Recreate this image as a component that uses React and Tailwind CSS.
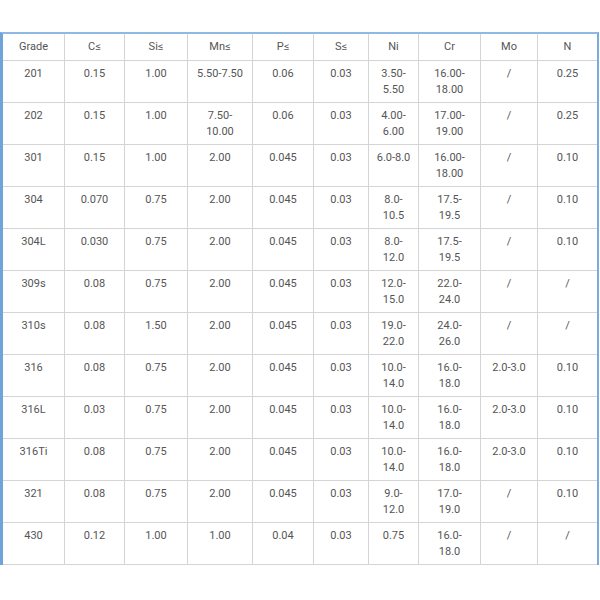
const COLS = [
  { key: 'grade', label: 'Grade', w: 'w-[62px]' },
  { key: 'c', label: 'C≤', w: 'w-[60px]' },
  { key: 'si', label: 'Si≤', w: 'w-[63px]' },
  { key: 'mn', label: 'Mn≤', w: 'w-[65px]' },
  { key: 'p', label: 'P≤', w: 'w-[61px]' },
  { key: 's', label: 'S≤', w: 'w-[55px]' },
  { key: 'ni', label: 'Ni', w: 'w-[50px]' },
  { key: 'cr', label: 'Cr', w: 'w-[62px]' },
  { key: 'mo', label: 'Mo', w: 'w-[57px]' },
  { key: 'n', label: 'N', w: 'w-[59px]' },
];

const ROWS = [
  ['201', '0.15', '1.00', '5.50-7.50', '0.06', '0.03', '3.50-\n5.50', '16.00-\n18.00', '/', '0.25'],
  ['202', '0.15', '1.00', '7.50-\n10.00', '0.06', '0.03', '4.00-\n6.00', '17.00-\n19.00', '/', '0.25'],
  ['301', '0.15', '1.00', '2.00', '0.045', '0.03', '6.0-8.0', '16.00-\n18.00', '/', '0.10'],
  ['304', '0.070', '0.75', '2.00', '0.045', '0.03', '8.0-\n10.5', '17.5-\n19.5', '/', '0.10'],
  ['304L', '0.030', '0.75', '2.00', '0.045', '0.03', '8.0-\n12.0', '17.5-\n19.5', '/', '0.10'],
  ['309s', '0.08', '0.75', '2.00', '0.045', '0.03', '12.0-\n15.0', '22.0-\n24.0', '/', '/'],
  ['310s', '0.08', '1.50', '2.00', '0.045', '0.03', '19.0-\n22.0', '24.0-\n26.0', '/', '/'],
  ['316', '0.08', '0.75', '2.00', '0.045', '0.03', '10.0-\n14.0', '16.0-\n18.0', '2.0-3.0', '0.10'],
  ['316L', '0.03', '0.75', '2.00', '0.045', '0.03', '10.0-\n14.0', '16.0-\n18.0', '2.0-3.0', '0.10'],
  ['316Ti', '0.08', '0.75', '2.00', '0.045', '0.03', '10.0-\n14.0', '16.0-\n18.0', '2.0-3.0', '0.10'],
  ['321', '0.08', '0.75', '2.00', '0.045', '0.03', '9.0-\n12.0', '17.0-\n19.0', '/', '0.10'],
  ['430', '0.12', '1.00', '1.00', '0.04', '0.03', '0.75', '16.0-\n18.0', '/', '/'],
];

export default function App() {
  return (
    <div className="h-[600px] w-[600px] bg-white pt-[32px] font-['Roboto',sans-serif]">
      <div className="w-[599px] border-t-2 border-l-[3px] border-r-2 border-t-[#8fb8e3] border-l-[#6fa3da] border-r-[#7aaade]">
        <table className="table-fixed border-separate border-spacing-0 text-[11px] text-[#555]">
          <colgroup>
            {COLS.map((c) => (
              <col key={c.key} className={c.w} />
            ))}
          </colgroup>
          <thead>
            <tr className="h-[27px]">
              {COLS.map((c, i) => (
                <th
                  key={c.key}
                  className={`border-b border-[#d4d4d4] text-center align-middle font-normal leading-4 ${
                    i < COLS.length - 1 ? 'border-r' : ''
                  }`}
                >
                  {c.label}
                </th>
              ))}
            </tr>
          </thead>
          <tbody>
            {ROWS.map((row) => (
              <tr key={row[0]} className="h-[42px]">
                {row.map((cell, i) => (
                  <td
                    key={i}
                    className={`whitespace-pre-line border-b border-[#d4d4d4] pt-[5px] text-center align-top leading-4 ${
                      i < row.length - 1 ? 'border-r' : ''
                    }`}
                  >
                    {cell}
                  </td>
                ))}
              </tr>
            ))}
          </tbody>
        </table>
      </div>
    </div>
  );
}
